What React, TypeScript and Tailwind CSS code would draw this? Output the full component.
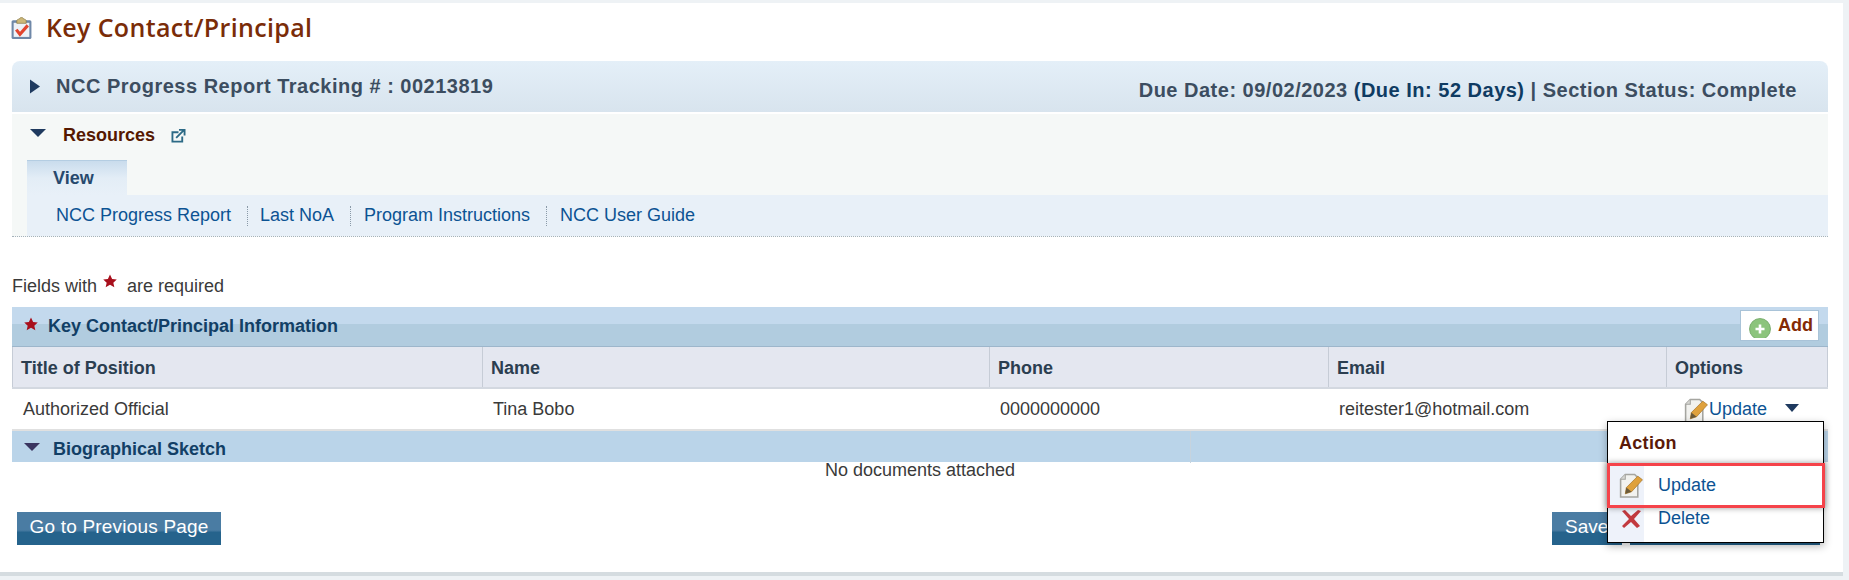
const arial = "font-['Liberation_Sans',Arial,sans-serif]";

const Star = ({ className }: { className: string }) => (
  <svg viewBox="0 0 24 24" className={className}>
    <path d="M12 1l3.6 7.4 8 .9-5.900 5.500 1.700 8.100-7.400-4.300-7.400 4.300 1.700-8.100L.4 9.300l8-.9z" fill="#a80f1c" />
  </svg>
);

const Caret = ({ className, color = "#1f3a5f" }: { className: string; color?: string }) => (
  <svg viewBox="0 0 16 8" preserveAspectRatio="none" className={className}>
    <path d="M0 0h16L8 8z" fill={color} />
  </svg>
);

const ClipboardIcon = () => (
  <svg viewBox="0 0 20 22" className="w-[21px] h-[23px] shrink-0 -mt-[2px]">
    <rect x=".5" y="4" width="19" height="18" rx="1.5" fill="#6f88a8" />
    <rect x="2.500" y="6.500" width="15" height="13.500" fill="#eef2f8" />
    <path d="M5.500 5c0-1.500 1-2 2.500-2C8 1 12 1 12 3c1.500 0 2.500.5 2.500 2v2h-9z" fill="#cdb878" stroke="#8b7a45" strokeWidth=".7" />
    <path d="M5 13l3.500 4.500L16 9" fill="none" stroke="#e2452f" strokeWidth="3" />
  </svg>
);

const PencilPage = ({ className }: { className: string }) => (
  <svg viewBox="0 0 24 24" className={className}>
    <path d="M7 1.500h9l3 3V23H2.500V6z" fill="#f2f2ef" stroke="#a5a5a0" strokeWidth="1.500" />
    <path d="M7 1.500V6H2.500" fill="#d8d8d4" stroke="#a5a5a0" strokeWidth="1" />
    <path d="M8 14L19 3l4.500 3.500L13 18l-6 2z" fill="#dfa13c" stroke="#a8772a" strokeWidth=".7" />
    <path d="M8 14l5 4-6 2z" fill="#6b5a3a" />
  </svg>
);

const PlusCircle = () => (
  <svg viewBox="0 0 22 20" className="w-[22px] h-5 shrink-0 mt-[5px]">
    <circle cx="11" cy="11" r="10.500" fill="#8cc47c" stroke="#6ea663" strokeWidth=".8" />
    <path d="M11 6.500v9M6.500 11h9" stroke="#ffffff" strokeWidth="2.600" />
  </svg>
);

const RedX = () => (
  <svg viewBox="0 0 20 18" className="w-5 h-[18px]">
    <path d="M1 1l3-1 6 6 7-6 3 1-7 8 6 7-3 2-6-6-7 6-2-2 7-7z" fill="#c23a3f" />
  </svg>
);

const ExternalIcon = () => (
  <svg viewBox="0 0 16 15" className="w-[15px] h-[14px] ml-[16px] -mt-[2px]" fill="none" stroke="#2c6a86" strokeWidth="2">
    <path d="M8 3.500H1.500v10H12V8" />
    <path d="M5.500 9.500L13.500 1.500M8.500 1h6v6" />
  </svg>
);

const columns = ["Title of Position", "Name", "Phone", "Email", "Options"];
const gridCols = "grid grid-cols-[471px_507px_339px_338px_161px]";

const SectionLink = ({ label, width, last }: { label: string; width: string; last?: boolean }) => (
  <a className={`${width} h-5 flex items-center text-[#0c5393] ${last ? "" : "border-r border-dotted border-[#8a9aa8]"}`}>
    {label}
  </a>
);

export default function App() {
  return (
    <div className={`relative w-[1849px] h-[580px] bg-[#eef2f5] overflow-hidden pt-[3px] ${arial}`}>
      <div className="w-[1843px] h-[573px] bg-white border-b-4 border-[#d5dce0]">
        <div className="h-[50px] mb-2 pl-[11px] flex items-center gap-[14px]">
          <ClipboardIcon />
          <h1 className="font-['Open_Sans',sans-serif] font-semibold text-[25px] text-[#7a2c08] tracking-[0.35px]">Key Contact/Principal</h1>
        </div>

        <div className="ml-3 w-[1816px]">
          <div className="h-[51px] rounded-t-lg bg-gradient-to-b from-[#e4eff8] to-[#d8e4ee] flex items-center justify-between pl-[18px] pr-[31px]">
            <div className="flex items-center gap-4 -mt-[1px]">
              <svg viewBox="0 0 10 14" className="w-[10px] h-[15px]"><path d="M0 0l10 7-10 7z" fill="#1f3a5f" /></svg>
              <span className="font-bold text-[20px] text-[#3c4d60] tracking-[0.5px]">NCC Progress Report Tracking # : 00213819</span>
            </div>
            <div className="font-bold text-[20px] text-[#3c4d60] tracking-[0.5px] mt-[6px]">
              Due Date: 09/02/2023 <span className="text-[#0f3b62]">(Due In: 52 Days)</span> | Section Status: Complete
            </div>
          </div>

          <div className="mt-[2px] bg-[#f5f8f7] h-[81px] flex flex-col">
            <div className="h-[46px] pl-[18px] flex items-center">
              <Caret className="w-4 h-2 mr-[17px] -mt-[8px]" />
              <span className="font-bold text-[18px] text-[#561800] -mt-[4px]">Resources</span>
              <ExternalIcon />
            </div>
            <div className="ml-[15px] w-[100px] h-[35px] bg-gradient-to-b from-[#c9dced] via-[#e3edf6] to-[#e8f0f8] border-t border-[#b4cde2] flex items-center pl-[26px] font-bold text-[18px] text-[#27496d]">
              View
            </div>
          </div>
          <div className="h-[42px] bg-[#f5f8f7] border-b border-dotted border-[#a6b2bb]">
            <div className="ml-[15px] h-full bg-[#e8f0f8] flex items-center pl-[29px] text-[18px]">
              <SectionLink label="NCC Progress Report" width="w-[192px]" />
              <div className="w-[12px]" />
              <SectionLink label="Last NoA" width="w-[91px]" />
              <div className="w-[13px]" />
              <SectionLink label="Program Instructions" width="w-[183px]" />
              <div className="w-[13px]" />
              <SectionLink label="NCC User Guide" width="w-[140px]" last />
            </div>
          </div>
        </div>

        <div className="h-[70px] pl-[12px] pt-[39px] flex items-start text-[18px] leading-[20px] text-[#3a3a3a]">
          <span>Fields with</span>
          <Star className="w-[14px] h-[14px] ml-[6px] mr-[10px] -mt-[2px]" />
          <span>are required</span>
        </div>

        <div className="ml-3 w-[1816px]">
          <div className="relative h-10 border-b border-[#9db6cb] bg-[linear-gradient(to_bottom,#c3d9ed_0,#c3d9ed_17px,#b1ccdf_17px,#b1ccdf_100%)] flex items-center pl-3">
            <Star className="w-[14px] h-[14px] -mt-[5px] mr-[10px]" />
            <span className="font-bold text-[18px] text-[#123f66]">Key Contact/Principal Information</span>
            <button className="absolute left-[1728px] top-[3px] w-[79px] h-[31px] bg-white border border-[#a9c3d8] flex items-center overflow-hidden pl-2 gap-[7px] font-bold text-[18px] text-[#842a04]">
              <PlusCircle />
              <span className="-mt-[1px]">Add</span>
            </button>
          </div>

          <div className={`${gridCols} h-[42px] bg-[#e4e7f0] border-b-2 border-[#d3d8e0] font-bold text-[18px] text-[#2b3e50]`}>
            {columns.map((c, i) => (
              <div key={c} className={`flex items-center pl-2 pt-[2px] border-r border-[#c6ccd6] ${i === 0 ? "border-l" : ""}`}>{c}</div>
            ))}
          </div>

          <div className={`${gridCols} h-[42px] border-b-2 border-[#e0e0e0] text-[18px] text-[#3a3a3a] items-center`}>
            <div className="pl-[11px]">Authorized Official</div>
            <div className="pl-[10px]">Tina Bobo</div>
            <div className="pl-[10px]">0000000000</div>
            <div className="pl-[10px]">reitester1@hotmail.com</div>
            <div className="flex items-center pl-[16px] text-[#0c5393]">
              <PencilPage className="w-[25px] h-[25px] mr-[1px] mt-[2px]" />
              <span>Update</span>
              <Caret className="w-[14px] h-2 ml-[18px] -mt-[2px]" />
            </div>
          </div>

          <div className="h-[31px] grid grid-cols-[1179px_637px] bg-[#bad4e9]">
            <div className="flex items-center pl-3 pt-[5px] border-r border-[#c6d3de] font-bold text-[18px] text-[#123f66]">
              <Caret className="w-4 h-2 mr-[13px] -mt-[5px]" color="#3a3560" />
              Biographical Sketch
            </div>
          </div>

          <div className="h-[18px] flex items-center justify-center text-[18px] text-[#3a3a3a] -mt-[1px]">No documents attached</div>

          <div className="mt-[33px] flex items-start pl-[5px]">
            <button className="w-[204px] h-[33px] bg-[linear-gradient(to_bottom,#4a7ca3_0,#4a7ca3_55%,#25638c_62%,#25638c_100%)] text-white text-[19px] tracking-[0.2px] pb-[2px]">Go to Previous Page</button>
            <button className="ml-[1331px] w-[70px] h-[33px] bg-[linear-gradient(to_bottom,#4a7ca3_0,#4a7ca3_55%,#25638c_62%,#25638c_100%)] text-white text-[19px] text-left pl-[13px] pb-[2px]">Save</button>
            <button aria-hidden className="ml-2 w-[190px] h-[33px] bg-[#25638c]" />
          </div>
        </div>
      </div>

      <div className="absolute left-[1607px] top-[421px] w-[217px] h-[122px] bg-white border border-black shadow-[0_3px_8px_rgba(0,0,0,0.3)] flex flex-col">
        <div className="h-[41px] flex items-center pl-[11px] pt-[2px] font-bold text-[18px] text-[#5a1a08] tracking-[0.3px]">Action</div>
        <div className="relative z-10 -mx-px w-[218px] h-[45px] border-[3px] border-[#f5434a] bg-white shadow-[0_0_6px_rgba(0,0,0,0.4)] flex items-stretch">
          <div className="w-[34px] bg-[#eef2fa] flex items-center justify-center pl-[6px]">
            <PencilPage className="w-[25px] h-[25px]" />
          </div>
          <div className="flex items-center pl-[14px] text-[18px] text-[#0c5393]">Update</div>
        </div>
        <div className="flex-1 flex items-stretch">
          <div className="w-[36px] bg-[#eef2fa] flex items-start justify-center pl-[10px] pt-[2px]">
            <RedX />
          </div>
          <div className="pl-[14px] text-[18px] text-[#0c5393] leading-[20px]">Delete</div>
        </div>
      </div>
    </div>
  );
}
